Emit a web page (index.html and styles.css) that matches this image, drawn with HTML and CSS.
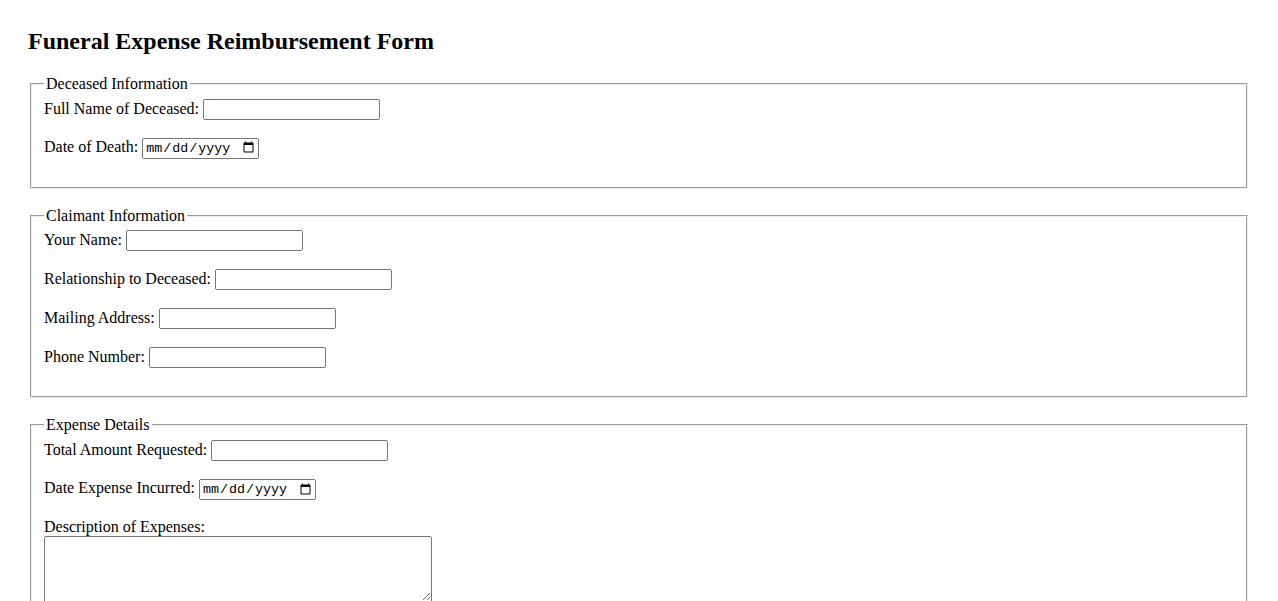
FILE: index.html
```html
<!DOCTYPE html>
<html lang="en">
<head>
<meta charset="utf-8">
<title>Funeral Expense Reimbursement Form</title>
<link rel="stylesheet" href="styles.css">
</head>
<body>
<h2 class="title">Funeral Expense Reimbursement Form</h2>
<form class="form">
  <fieldset class="group">
    <legend>Deceased Information</legend>
    <label for="dname">Full Name of Deceased:</label> <input class="text" type="text" id="dname"><br><br>
    <label for="ddate">Date of Death:</label> <input class="date" type="date" id="ddate"><br><br>
  </fieldset>
  <fieldset class="group">
    <legend>Claimant Information</legend>
    <label for="cname">Your Name:</label> <input class="text" type="text" id="cname"><br><br>
    <label for="rel">Relationship to Deceased:</label> <input class="text" type="text" id="rel"><br><br>
    <label for="addr">Mailing Address:</label> <input class="text" type="text" id="addr"><br><br>
    <label for="phone">Phone Number:</label> <input class="text" type="text" id="phone"><br><br>
  </fieldset>
  <fieldset class="group">
    <legend>Expense Details</legend>
    <label for="amt">Total Amount Requested:</label> <input class="text" type="text" id="amt"><br><br>
    <label for="edate">Date Expense Incurred:</label> <input class="date" type="date" id="edate"><br><br>
    <label for="desc">Description of Expenses:</label><br>
    <textarea class="desc" id="desc" rows="5"></textarea><br><br>
  </fieldset>
</form>
</body>
</html>
```

FILE: styles.css
```css
body {
  margin: 28px;
  font-family: "Liberation Serif", "Times New Roman", serif;
  font-size: 16px;
  color: #000;
  background: #fff;
}

.title {
  font-size: 24px;
  font-weight: bold;
  margin: 0 0 20px;
}

.group {
  margin: 0 2px 18px;
}

.text {
  box-sizing: border-box;
  width: 177px;
  height: 21px;
  font-family: "Liberation Sans", Arial, sans-serif;
  font-size: 13.33px;
}

.date {
  box-sizing: border-box;
  width: 117px;
  height: 21px;
  font-family: "Liberation Mono", "DejaVu Sans Mono", monospace;
  font-size: 13.33px;
}

.desc {
  box-sizing: border-box;
  width: 388px;
  height: 66px;
  font-family: "Liberation Mono", monospace;
  font-size: 13.33px;
}
```
